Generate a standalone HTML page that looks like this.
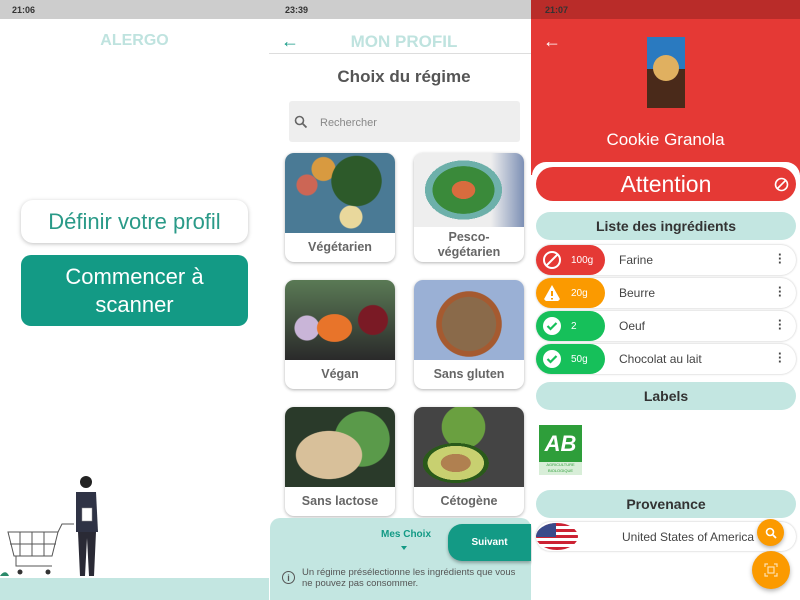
<!DOCTYPE html>
<html><head><meta charset="utf-8"><style>
*{box-sizing:border-box;margin:0;padding:0}
body{width:800px;height:600px;overflow:hidden;background:#fff;font-family:"Liberation Sans",sans-serif;position:relative}
.a{position:absolute}
.c{display:flex;align-items:center;justify-content:center;text-align:center}
.sb{font-size:9px;font-weight:bold;color:#333;padding:5px 0 0 12px}
.card{position:absolute;width:110px;height:109px;border-radius:9px;background:#fff;box-shadow:0 1px 3px rgba(0,0,0,.3);overflow:hidden}
.card .img{height:80px}
.card .lb{height:29px;display:flex;align-items:center;justify-content:center;text-align:center;font-size:12.5px;font-weight:bold;color:#666;line-height:15px}
.pill{position:absolute;left:536px;width:260px;border-radius:15px;background:#c3e6e1;color:#333;font-size:14px;font-weight:bold}
.row{position:absolute;left:536px;width:260px;height:30px;border-radius:15px;background:#fff;box-shadow:0 0 2px rgba(0,0,0,.25);font-size:12px;color:#444}
.row .tag{position:absolute;left:0;top:0;width:69px;height:30px;border-radius:15px;color:#fff;font-size:10px}
.row .ic{position:absolute;left:6px;top:5px;width:20px;height:20px;border-radius:50%}
.row .q{position:absolute;left:35px;top:10px}
.row .n{position:absolute;left:83px;top:8px}
.row .d{position:absolute;right:15px;top:8px;font-weight:bold;font-size:13px;line-height:4px;width:3px}
</style></head><body>
<!-- LEFT -->
<div class="a sb" style="left:0;top:0;width:269px;height:19px;background:#cdcdcd;padding-left:12px">21:06</div>
<div class="a c" style="left:0;top:32px;width:269px;font-size:16px;font-weight:bold;color:#bfe3df">ALERGO</div>
<div class="a c" style="left:21px;top:200px;width:227px;height:43px;border-radius:12px;background:#fff;box-shadow:0 1px 4px rgba(0,0,0,.25);color:#2a9a88;font-size:22px">Définir votre profil</div>
<div class="a c" style="left:21px;top:255px;width:227px;height:71px;border-radius:10px;background:#139a85;color:#fff;font-size:22px;line-height:28px">Commencer à<br>scanner</div>
<svg class="a" style="left:0;top:472px" width="120" height="108">
<g stroke="#555" fill="none" stroke-width="1"><path d="M8 60h50l-6 24H14z M20 60v24 M32 60v24 M44 60v24 M10 72h46"/><path d="M58 60l4-8h12"/><path d="M16 84v10h36"/></g>
<circle cx="20" cy="100" r="2.5" fill="#333"/><circle cx="48" cy="100" r="2.5" fill="#333"/>
<circle cx="86" cy="10" r="6" fill="#222"/><path d="M76 20h20l2 40h-22z" fill="#2f3345"/><path d="M78 60h18l-2 44h-5l-2-38-2 38h-5z" fill="#2a2a35"/><rect x="82" y="36" width="10" height="13" fill="#fff" stroke="#999" stroke-width=".5"/>
<path d="M0 104c3-5 7-5 9 0z" fill="#2a8a6a"/></svg>
<div class="a" style="left:0;top:578px;width:269px;height:22px;background:#c3e6e1"></div>

<!-- MIDDLE -->
<div class="a sb" style="left:269px;top:0;width:262px;height:19px;background:#cdcdcd;padding-left:16px">23:39</div>
<div class="a" style="left:281px;top:31px;font-size:18px;color:#139a85">&#8592;</div>
<div class="a c" style="left:269px;top:32px;width:270px;font-size:17px;font-weight:bold;color:#bfe3df">MON PROFIL</div>
<div class="a" style="left:269px;top:53px;width:262px;height:1px;background:#ddd"></div>
<div class="a c" style="left:269px;top:67px;width:270px;font-size:17px;font-weight:bold;color:#555">Choix du régime</div>
<div class="a" style="left:289px;top:101px;width:231px;height:41px;background:#eee;border-radius:3px"></div>
<svg class="a" style="left:294px;top:115px" width="14" height="14"><circle cx="5.5" cy="5.5" r="4" stroke="#666" stroke-width="1.6" fill="none"/><path d="M8.5 8.5l4 4" stroke="#666" stroke-width="1.8"/></svg>
<div class="a" style="left:320px;top:117px;font-size:11px;color:#888">Rechercher</div>
<div class="card" style="left:285px;top:153px"><div class="img" style="background:radial-gradient(circle at 20% 40%,#c65 0 10%,transparent 11%),radial-gradient(circle at 65% 35%,#2d5a2a 0 28%,transparent 29%),radial-gradient(circle at 60% 80%,#e9d89c 0 12%,transparent 13%),radial-gradient(circle at 35% 20%,#d89a40 0 12%,transparent 13%),#4a7a95"></div><div class="lb">Végétarien</div></div>
<div class="card" style="left:414px;top:153px"><div class="img" style="height:74px;background:radial-gradient(ellipse 35% 40% at 45% 50%,#d86c3e 0 30%,#3a8a3a 31% 80%,#6db0aa 81% 100%,transparent 100%),linear-gradient(90deg,#eee 70%,#7d90b5)"></div><div class="lb" style="height:35px">Pesco-<br>végétarien</div></div>
<div class="card" style="left:285px;top:280px"><div class="img" style="background:radial-gradient(ellipse at 45% 60%,#e8742a 0 20%,transparent 21%),radial-gradient(circle at 80% 50%,#7a1a25 0 15%,transparent 16%),radial-gradient(circle at 20% 60%,#c9b5d8 0 12%,transparent 13%),linear-gradient(#5a7a55,#2a2a2a)"></div><div class="lb">Végan</div></div>
<div class="card" style="left:414px;top:280px"><div class="img" style="background:radial-gradient(circle at 50% 55%,#8a6a4a 0 38%,#a55a30 39% 46%,transparent 47%),#9ab0d5"></div><div class="lb">Sans gluten</div></div>
<div class="card" style="left:285px;top:407px"><div class="img" style="background:radial-gradient(ellipse at 40% 60%,#d8c09a 0 35%,transparent 36%),radial-gradient(circle at 70% 40%,#5a9a4a 0 30%,transparent 31%),#2a3a2a"></div><div class="lb">Sans lactose</div></div>
<div class="card" style="left:414px;top:407px"><div class="img" style="background:radial-gradient(ellipse 30% 25% at 38% 70%,#b08050 0 45%,#c8d070 46% 85%,#2a5a1a 86% 100%,transparent 100%),radial-gradient(ellipse at 45% 25%,#6aa040 0 25%,transparent 26%),#444"></div><div class="lb">Cétogène</div></div>
<div class="a" style="left:270px;top:518px;width:261px;height:82px;background:#c3e6e1;border-radius:10px 10px 0 0"></div>
<div class="a" style="left:381px;top:529px;font-size:10px;font-weight:bold;color:#139a85">Mes Choix</div>
<div class="a" style="left:401px;top:546px;border:3px solid transparent;border-top:4px solid #139a85"></div>
<div class="a c" style="left:448px;top:524px;width:83px;height:37px;border-radius:14px 0 0 14px;background:#139a85;color:#fff;font-size:10px;font-weight:bold;box-shadow:0 2px 3px rgba(0,0,0,.3)">Suivant</div>
<div class="a c" style="left:282px;top:571px;width:13px;height:13px;border-radius:50%;border:1.3px solid #555;font-size:9px;color:#555;font-weight:bold">i</div>
<div class="a" style="left:302px;top:567px;width:225px;font-size:9.5px;color:#555;line-height:11px">Un régime présélectionne les ingrédients que vous ne pouvez pas consommer.</div>

<!-- RIGHT -->
<div class="a" style="left:531px;top:0;width:269px;height:175px;background:#e53935"></div>
<div class="a sb" style="left:531px;top:0;width:269px;height:19px;background:#b92c29;padding-left:14px">21:07</div>
<div class="a" style="left:543px;top:31px;font-size:18px;color:#fff">&#8592;</div>
<div class="a" style="left:647px;top:37px;width:38px;height:71px;background:linear-gradient(#2a7ac0 0 45%,#4a2a1a 45%);"><div style="margin:18px auto 0;width:26px;height:26px;border-radius:50%;background:#e0b060"></div></div>
<div class="a c" style="left:531px;top:130px;width:269px;font-size:17px;color:#fff">Cookie Granola</div>
<div class="a" style="left:532px;top:162px;width:268px;height:438px;background:#fff;border-radius:14px 14px 0 0"></div>
<div class="a c" style="left:536px;top:167px;width:260px;height:34px;border-radius:17px;background:#e53935;color:#fff;font-size:23px">Attention</div>
<svg class="a" style="left:774px;top:177px" width="15" height="15"><circle cx="7.5" cy="7.5" r="6" stroke="#fff" stroke-width="1.6" fill="none"/><path d="M3.5 11.5l8-8" stroke="#fff" stroke-width="1.6"/></svg>
<div class="pill c" style="top:212px;height:28px">Liste des ingrédients</div>
<div class="row" style="top:245px"><div class="tag" style="background:#e53935"><svg class="ic" width="20" height="20"><circle cx="10" cy="10" r="8" stroke="#fff" stroke-width="2" fill="none"/><path d="M4.5 15.5l11-11" stroke="#fff" stroke-width="2"/></svg><span class="q">100g</span></div><span class="n">Farine</span><span class="d">·<br>·<br>·</span></div>
<div class="row" style="top:278px"><div class="tag" style="background:#fb9a00"><svg class="ic" width="20" height="20"><path d="M10 2l9 16H1z" fill="#fff"/><path d="M10 8v5M10 15v1.5" stroke="#fb9a00" stroke-width="2"/></svg><span class="q">20g</span></div><span class="n">Beurre</span><span class="d">·<br>·<br>·</span></div>
<div class="row" style="top:311px"><div class="tag" style="background:#16c05a"><svg class="ic" width="20" height="20"><circle cx="10" cy="10" r="9" fill="#fff"/><path d="M5.5 10l3 3 6-6" stroke="#16c05a" stroke-width="2.2" fill="none"/></svg><span class="q">2</span></div><span class="n">Oeuf</span><span class="d">·<br>·<br>·</span></div>
<div class="row" style="top:344px"><div class="tag" style="background:#16c05a"><svg class="ic" width="20" height="20"><circle cx="10" cy="10" r="9" fill="#fff"/><path d="M5.5 10l3 3 6-6" stroke="#16c05a" stroke-width="2.2" fill="none"/></svg><span class="q">50g</span></div><span class="n">Chocolat au lait</span><span class="d">·<br>·<br>·</span></div>
<div class="pill c" style="top:382px;height:28px">Labels</div>
<div class="a" style="left:539px;top:425px;width:43px;height:50px;background:#fff">
<div class="c" style="height:37px;background:#2e9e3a;color:#fff;font-size:22px;font-weight:bold;font-style:italic">AB</div>
<div style="height:13px;background:#d8eed8;font-size:4px;color:#2e9e3a;text-align:center;line-height:6px">AGRICULTURE BIOLOGIQUE</div></div>
<div class="pill c" style="top:490px;height:28px">Provenance</div>
<div class="row" style="top:522px;height:29px"><div class="a" style="left:0;top:1px;width:42px;height:27px;border-radius:50%;background:repeating-linear-gradient(#c23 0 3px,#fff 3px 6px);overflow:hidden"><div style="width:20px;height:14px;background:#3a4a8a"></div></div><span class="a" style="left:86px;top:8px">United States of America</span></div>
<div class="a c" style="left:757px;top:519px;width:27px;height:27px;border-radius:50%;background:#fb9a00;box-shadow:0 2px 4px rgba(0,0,0,.3)"><svg width="12" height="12"><circle cx="5" cy="5" r="3.5" stroke="#fff" stroke-width="1.6" fill="none"/><path d="M7.5 7.5l3.5 3.5" stroke="#fff" stroke-width="1.8"/></svg></div>
<div class="a c" style="left:752px;top:551px;width:38px;height:38px;border-radius:50%;background:#fb9a00;box-shadow:0 2px 5px rgba(0,0,0,.3)"><svg width="14" height="14" stroke="#fde0b0" fill="none" stroke-width="1.2"><path d="M1 4V1h3M10 1h3v3M13 10v3h-3M4 13H1v-3"/><rect x="4" y="4" width="6" height="6"/></svg></div>
</body></html>
